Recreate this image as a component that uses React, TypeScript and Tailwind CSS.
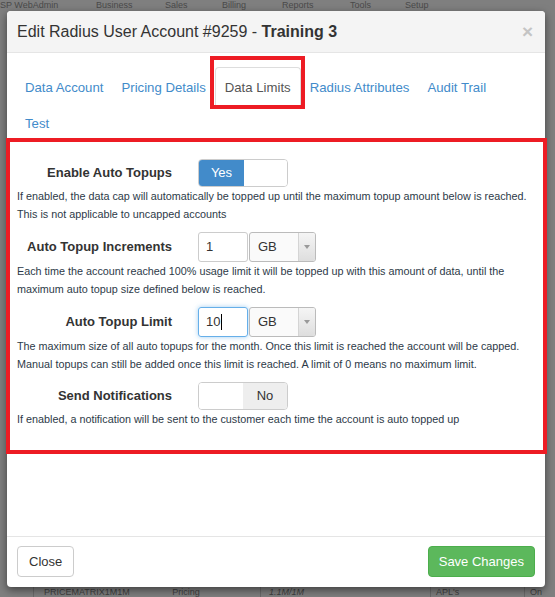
import { useState } from "react";

type Row = {
  label: string;
  help: string[];
};

const TABS = ["Data Account", "Pricing Details", "Data Limits", "Radius Attributes", "Audit Trail"];

function Toggle({ on }: { on: boolean }) {
  return (
    <div className="flex h-[28px] w-[90px] overflow-hidden rounded-[4px] border border-[#cccccc] bg-white text-[13px]">
      {on ? (
        <>
          <span className="flex w-[45px] items-center justify-center bg-[#428bca] text-white">Yes</span>
          <span className="flex-1 bg-white" />
        </>
      ) : (
        <>
          <span className="flex-1 bg-white" />
          <span className="flex w-[44px] items-center justify-center bg-[#eeeeee] text-[#333]">No</span>
        </>
      )}
    </div>
  );
}

function SizeInput({ value, focused }: { value: string; focused?: boolean }) {
  return (
    <div className="flex h-[30px] items-center gap-[1px]">
      <div
        className={`flex h-[30px] w-[50px] items-center rounded-[3px] border px-[7px] text-[13px] text-[#333] ${
          focused
            ? "border-[#66afe9] shadow-[0_0_5px_rgba(102,175,233,0.6)]"
            : "border-[#cccccc]"
        }`}
      >
        {value}
        {focused && <span className="ml-px h-[16px] w-px bg-black" />}
      </div>
      <div className="flex h-[30px] w-[67px] items-stretch overflow-hidden rounded-[3px] border border-[#bbbbbb] bg-[#fafafa] text-[13px] text-[#333]">
        <span className="flex flex-1 items-center pl-[8px]">GB</span>
        <span className="flex w-[17px] items-center justify-center border-l border-[#d4d4d4] bg-gradient-to-b from-[#f5f5f5] to-[#dedede]">
          <span className="h-0 w-0 border-x-[3px] border-t-[4px] border-x-transparent border-t-[#999]" />
        </span>
      </div>
    </div>
  );
}

function FieldRow({ label, help, children }: Row & { children: React.ReactNode }) {
  return (
    <div>
      <div className="flex items-center">
        <label className="w-[155px] text-right text-[13px] font-bold text-[#333]">{label}</label>
        <div className="ml-[26px]">{children}</div>
      </div>
      <div className="whitespace-nowrap text-[10.8px] leading-[18px] text-[#2d3a48]">
        {help.map((line) => (
          <div key={line}>{line}</div>
        ))}
      </div>
    </div>
  );
}

export default function App() {
  const [tab, setTab] = useState("Data Limits");

  return (
    <div
      className="relative h-[597px] w-[555px] overflow-hidden bg-[#7f7f7f]"
      style={{ fontFamily: '"Liberation Sans", Arial, sans-serif' }}
    >
      {/* page behind the backdrop */}
      <div className="flex h-[11px] items-start text-[9px] leading-[10px] text-[#4a4a4a]">
        <span className="w-[96px]">SP WebAdmin</span>
        <span className="w-[69px]">Business</span>
        <span className="w-[57px]">Sales</span>
        <span className="w-[60px]">Billing</span>
        <span className="w-[68px]">Reports</span>
        <span className="w-[55px]">Tools</span>
        <span>Setup</span>
      </div>
      <div className="absolute bottom-0 left-0 flex h-[10px] w-full text-[9px] leading-[10px] text-[#3f3f3f]">
        <span className="w-[34px] border-r border-[#6a6a6a]" />
        <span className="w-[227px] border-r border-[#6a6a6a] pl-[10px]">
          PRICEMATRIX1M1M <span className="ml-[40px]">Pricing</span>
        </span>
        <span className="w-[170px] border-r border-[#6a6a6a] pl-[8px] italic">1.1M/1M</span>
        <span className="w-[94px] border-r border-[#6a6a6a] pl-[5px]">APL's</span>
        <span className="pl-[5px]">On</span>
      </div>

      {/* modal */}
      <div className="absolute left-[7px] top-[11px] flex h-[576px] w-[538px] flex-col rounded-[4px] bg-white shadow-[0_3px_9px_rgba(0,0,0,0.5)]">
        <div className="flex h-[42px] items-center justify-between rounded-t-[4px] border-b border-[#e5e5e5] bg-[#f4f4f4] pl-[10px] pr-[12px]">
          <h4 className="text-[16px] text-[#333]">
            Edit Radius User Account #9259 - <b>Training 3</b>
          </h4>
          <span className="text-[19px] font-bold leading-none text-[#c4c4c4]">×</span>
        </div>

        <div className="flex flex-col pl-[9px] pr-[10px] pt-[14px] text-[13.2px]">
          <div className="flex">
            {TABS.map((t) => (
              <button
                key={t}
                onClick={() => setTab(t)}
                className={`h-[41px] px-[9px] ${
                  t === tab
                    ? "rounded-t-[4px] border border-b-0 border-[#dddddd] text-[#555]"
                    : "text-[#428bca]"
                }`}
              >
                {t}
              </button>
            ))}
          </div>
          <div className="flex">
            <button className="h-[32px] px-[9px] text-left text-[#428bca]">Test</button>
          </div>
        </div>

        <div className="flex flex-col gap-[9px] px-[10px] pt-[19px]">
          <FieldRow
            label="Enable Auto Topups"
            help={[
              "If enabled, the data cap will automatically be topped up until the maximum topup amount below is reached.",
              "This is not applicable to uncapped accounts",
            ]}
          >
            <Toggle on />
          </FieldRow>
          <FieldRow
            label="Auto Topup Increments"
            help={[
              "Each time the account reached 100% usage limit it will be topped up with this amount of data, until the",
              "maximum auto topup size defined below is reached.",
            ]}
          >
            <SizeInput value="1" />
          </FieldRow>
          <FieldRow
            label="Auto Topup Limit"
            help={[
              "The maximum size of all auto topups for the month. Once this limit is reached the account will be capped.",
              "Manual topups can still be added once this limit is reached. A limit of 0 means no maximum limit.",
            ]}
          >
            <SizeInput value="10" focused />
          </FieldRow>
          <FieldRow
            label="Send Notifications"
            help={["If enabled, a notification will be sent to the customer each time the account is auto topped up"]}
          >
            <Toggle on={false} />
          </FieldRow>
        </div>

        <div className="mt-auto flex items-center justify-between border-t border-[#e5e5e5] pb-[10px] pl-[10px] pr-[10px] pt-[9px] text-[13px]">
          <button className="h-[31px] rounded-[4px] border border-[#cccccc] bg-white px-[11px] text-[#333]">Close</button>
          <button className="h-[31px] rounded-[4px] border border-[#4cae4c] bg-[#5cb85c] px-[10px] text-white">
            Save Changes
          </button>
        </div>
      </div>

      {/* highlight frames */}
      <div className="pointer-events-none absolute left-[210px] top-[56px] h-[53px] w-[95px] border-[4px] border-[#ed1c24]" />
      <div className="pointer-events-none absolute left-[6px] top-[138px] h-[316px] w-[541px] border-[4px] border-[#ed1c24]" />
    </div>
  );
}
